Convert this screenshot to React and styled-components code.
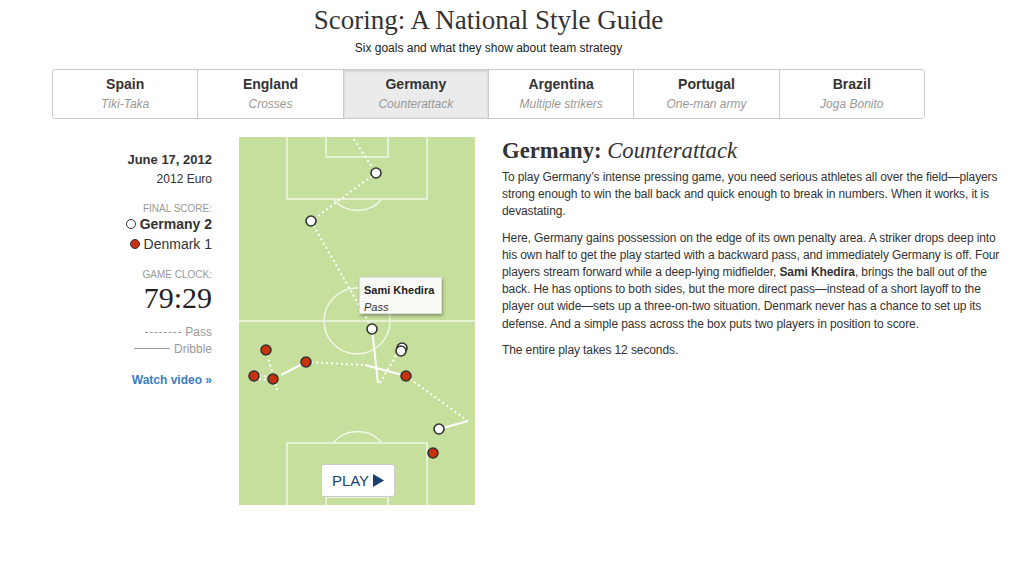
import React from 'react';
import styled, { createGlobalStyle } from 'styled-components';

const GlobalStyle = createGlobalStyle`
body {
  margin: 0;
  background: #fff;
  font-family: "Liberation Sans", Arial, sans-serif;
  color: #333;
}
`

const Page = styled.div`
width: 873px;
margin-left: 52px;
`

const Header = styled.header`
text-align: center;
padding-top: 4px;
`

const Title = styled.h1`
margin: 0;
font-family: "Liberation Serif", Georgia, serif;
font-weight: normal;
font-size: 27px;
line-height: 32px;
color: #333;
`

const Subtitle = styled.p`
margin: 5px 0 0;
font-size: 12px;
color: #222;
`

const Tabs = styled.nav`
display: flex;
margin-top: 14px;
border: 1px solid #ccc;
border-radius: 3px;
overflow: hidden;
`

const Tab = styled.div`
flex: 1;
height: 48px;
box-sizing: border-box;
padding-bottom: 2px;
display: flex;
flex-direction: column;
align-items: center;
justify-content: center;
gap: 5px;
border-left: ${p => (p.$first ? 'none' : '1px solid #ccc')};
background: ${p => (p.$active ? '#ebebeb' : '#fff')};
box-shadow: ${p => (p.$active ? 'inset 0 1px 3px rgba(0,0,0,.15)' : 'none')};
`

const TabName = styled.div`
font-size: 14px;
font-weight: bold;
color: #333;
`

const TabStyle = styled.div`
font-size: 12px;
font-style: italic;
color: #999;
`

const Main = styled.div`
display: flex;
align-items: flex-start;
margin-top: 18px;
`

const Sidebar = styled.aside`
width: 160px;
flex-shrink: 0;
text-align: right;
padding-top: 15px;
`

const DateLine = styled.div`
font-size: 13px;
font-weight: bold;
color: #333;
`

const Competition = styled.div`
font-size: 12px;
margin-top: 5px;
color: #333;
`

const Label = styled.div`
font-size: 10px;
color: #999;
text-transform: uppercase;
margin-top: ${p => p.$top || 14}px;
`

const TeamRow = styled.div`
display: flex;
justify-content: flex-end;
align-items: center;
gap: 4px;
font-size: 14px;
font-weight: ${p => (p.$bold ? 'bold' : 'normal')};
margin-top: ${p => p.$top || 0}px;
line-height: 18px;
`

const Dot = styled.span`
width: 8px;
height: 8px;
border-radius: 50%;
border: 1.5px solid #333;
background: ${p => p.$color};
`

const Clock = styled.div`
font-family: "Liberation Serif", Georgia, serif;
font-size: 30px;
line-height: 34px;
color: #222;
margin-top: 1px;
`

const Legend = styled.div`
display: flex;
justify-content: flex-end;
align-items: center;
gap: 4px;
font-size: 12px;
color: #999;
margin-top: ${p => p.$top || 0}px;
line-height: 16.5px;
`

const LegendLine = styled.span`
width: 36px;
border-top: 1px ${p => (p.$dashed ? 'dashed' : 'solid')} #999;
`

const WatchLink = styled.a`
display: block;
margin-top: 16px;
font-size: 12px;
font-weight: bold;
color: #3a7ebf;
text-decoration: none;
`

const FieldWrap = styled.div`
position: relative;
width: 236px;
height: 368px;
margin-left: 27px;
background: #c6df9c;
flex-shrink: 0;
`

const Tooltip = styled.div`
position: absolute;
left: 120px;
top: 140px;
width: 83px;
height: 37px;
box-sizing: border-box;
padding: 4px 0 0 4px;
background: #f9faf5;
border: 1px solid #ddd;
box-shadow: 1px 2px 3px rgba(0,0,0,.3);
font-size: 11px;
line-height: 17px;
`

const TipName = styled.div`
font-weight: bold;
color: #222;
`

const TipAction = styled.div`
font-style: italic;
color: #333;
`

const PlayButton = styled.button`
position: absolute;
left: 82px;
top: 327px;
width: 74px;
height: 33px;
background: #fff;
border: 1px solid #ccc;
border-radius: 3px;
font-family: "Liberation Sans", Arial, sans-serif;
font-size: 15px;
color: #1d3f6e;
display: flex;
align-items: center;
justify-content: center;
gap: 4px;
padding: 0;
`

const Article = styled.article`
margin-left: 27px;
width: 502px;
flex-shrink: 0;
padding-top: 1px;
`

const ArticleTitle = styled.h2`
margin: 0 0 5px;
font-family: "Liberation Serif", Georgia, serif;
font-size: 22.7px;
line-height: 26px;
font-weight: bold;
color: #333;
em {
  font-weight: normal;
}
`

const Para = styled.p`
margin: 0 0 9px;
font-size: 12px;
line-height: 17.2px;
letter-spacing: -0.1px;
color: #333;
`

const tabs = [
  ['Spain', 'Tiki-Taka'],
  ['England', 'Crosses'],
  ['Germany', 'Counterattack'],
  ['Argentina', 'Multiple strikers'],
  ['Portugal', 'One-man army'],
  ['Brazil', 'Joga Bonito'],
]

const passes = [
  [112, -2, 137, 36],
  [137, 36, 72, 84],
  [72, 84, 133, 191],
  [141, 246, 159, 215],
  [67, 225, 126, 228],
  [167, 239, 229, 284],
  [27, 213, 38, 253],
  [15, 238, 34, 240],
  [15, 241, 34, 244],
]

const dribbles = [
  [133, 192, 139, 246],
  [126, 228, 167, 239],
  [229, 284, 200, 292],
  [67, 225, 42, 238],
]

const whites = [[137, 36], [72, 84], [133, 192], [163, 211], [162, 214], [200, 292]]
const reds = [[167, 239], [194, 316], [67, 225], [34, 242], [27, 213], [15, 239]]

const Pitch = () => (
  <svg width="236" height="368" viewBox="0 0 236 368">
    <g fill="none" stroke="#f1f6e6" strokeWidth="1.5">
      <rect x="48" y="-2" width="140" height="64" />
      <rect x="87" y="-2" width="62" height="22" />
      <path d="M94 62 A32 32 0 0 0 143 62" />
      <line x1="0" y1="184" x2="236" y2="184" />
      <circle cx="118" cy="184" r="33" />
      <rect x="48" y="306" width="140" height="66" />
      <rect x="87" y="360" width="62" height="12" />
      <path d="M94 306 A32 32 0 0 1 143 306" />
    </g>
    <g stroke="#fff" strokeWidth="2" strokeDasharray="2 3">
      {passes.map(([x1, y1, x2, y2], i) => (
        <line key={i} x1={x1} y1={y1} x2={x2} y2={y2} />
      ))}
    </g>
    <g stroke="#fff" strokeWidth="2">
      {dribbles.map(([x1, y1, x2, y2], i) => (
        <line key={i} x1={x1} y1={y1} x2={x2} y2={y2} />
      ))}
    </g>
    <g stroke="#333" strokeWidth="1.6">
      {whites.map(([x, y], i) => (
        <circle key={i} cx={x} cy={y} r="5" fill="#fff" />
      ))}
      {reds.map(([x, y], i) => (
        <circle key={i} cx={x} cy={y} r="5" fill="#c8320c" />
      ))}
    </g>
  </svg>
)

const PlayIcon = () => (
  <svg width="11" height="13" viewBox="0 0 11 13">
    <path d="M0 0 L11 6.5 L0 13 Z" fill="#1d3f6e" />
  </svg>
)

const App = () => {
  return (
    <Page>
      <GlobalStyle />
      <Header>
        <Title>Scoring: A National Style Guide</Title>
        <Subtitle>Six goals and what they show about team strategy</Subtitle>
      </Header>
      <Tabs>
        {tabs.map(([name, style], i) => (
          <Tab key={name} $first={i === 0} $active={name === 'Germany'}>
            <TabName>{name}</TabName>
            <TabStyle>{style}</TabStyle>
          </Tab>
        ))}
      </Tabs>
      <Main>
        <Sidebar>
          <DateLine>June 17, 2012</DateLine>
          <Competition>2012 Euro</Competition>
          <Label $top={17}>Final score:</Label>
          <TeamRow $bold $top={1}><Dot $color="#fff" />Germany 2</TeamRow>
          <TeamRow $top={2}><Dot $color="#c8320c" />Denmark 1</TeamRow>
          <Label $top={16}>Game clock:</Label>
          <Clock>79:29</Clock>
          <Legend $top={9}><LegendLine $dashed />Pass</Legend>
          <Legend><LegendLine />Dribble</Legend>
          <WatchLink href="#">Watch video »</WatchLink>
        </Sidebar>
        <FieldWrap>
          <Pitch />
          <Tooltip>
            <TipName>Sami Khedira</TipName>
            <TipAction>Pass</TipAction>
          </Tooltip>
          <PlayButton>PLAY <PlayIcon /></PlayButton>
        </FieldWrap>
        <Article>
          <ArticleTitle>Germany: <em>Counterattack</em></ArticleTitle>
          <Para>
            To play Germany’s intense pressing game, you need serious athletes all over the field—players strong enough to win the ball back and quick enough to break in numbers. When it works, it is devastating.
          </Para>
          <Para>
            Here, Germany gains possession on the edge of its own penalty area. A striker drops deep into his own half to get the play started with a backward pass, and immediately Germany is off. Four players stream forward while a deep-lying midfielder, <b>Sami Khedira</b>, brings the ball out of the back. He has options to both sides, but the more direct pass—instead of a short layoff to the player out wide—sets up a three-on-two situation. Denmark never has a chance to set up its defense. And a simple pass across the box puts two players in position to score.
          </Para>
          <Para>The entire play takes 12 seconds.</Para>
        </Article>
      </Main>
    </Page>
  );
}

export default App;
